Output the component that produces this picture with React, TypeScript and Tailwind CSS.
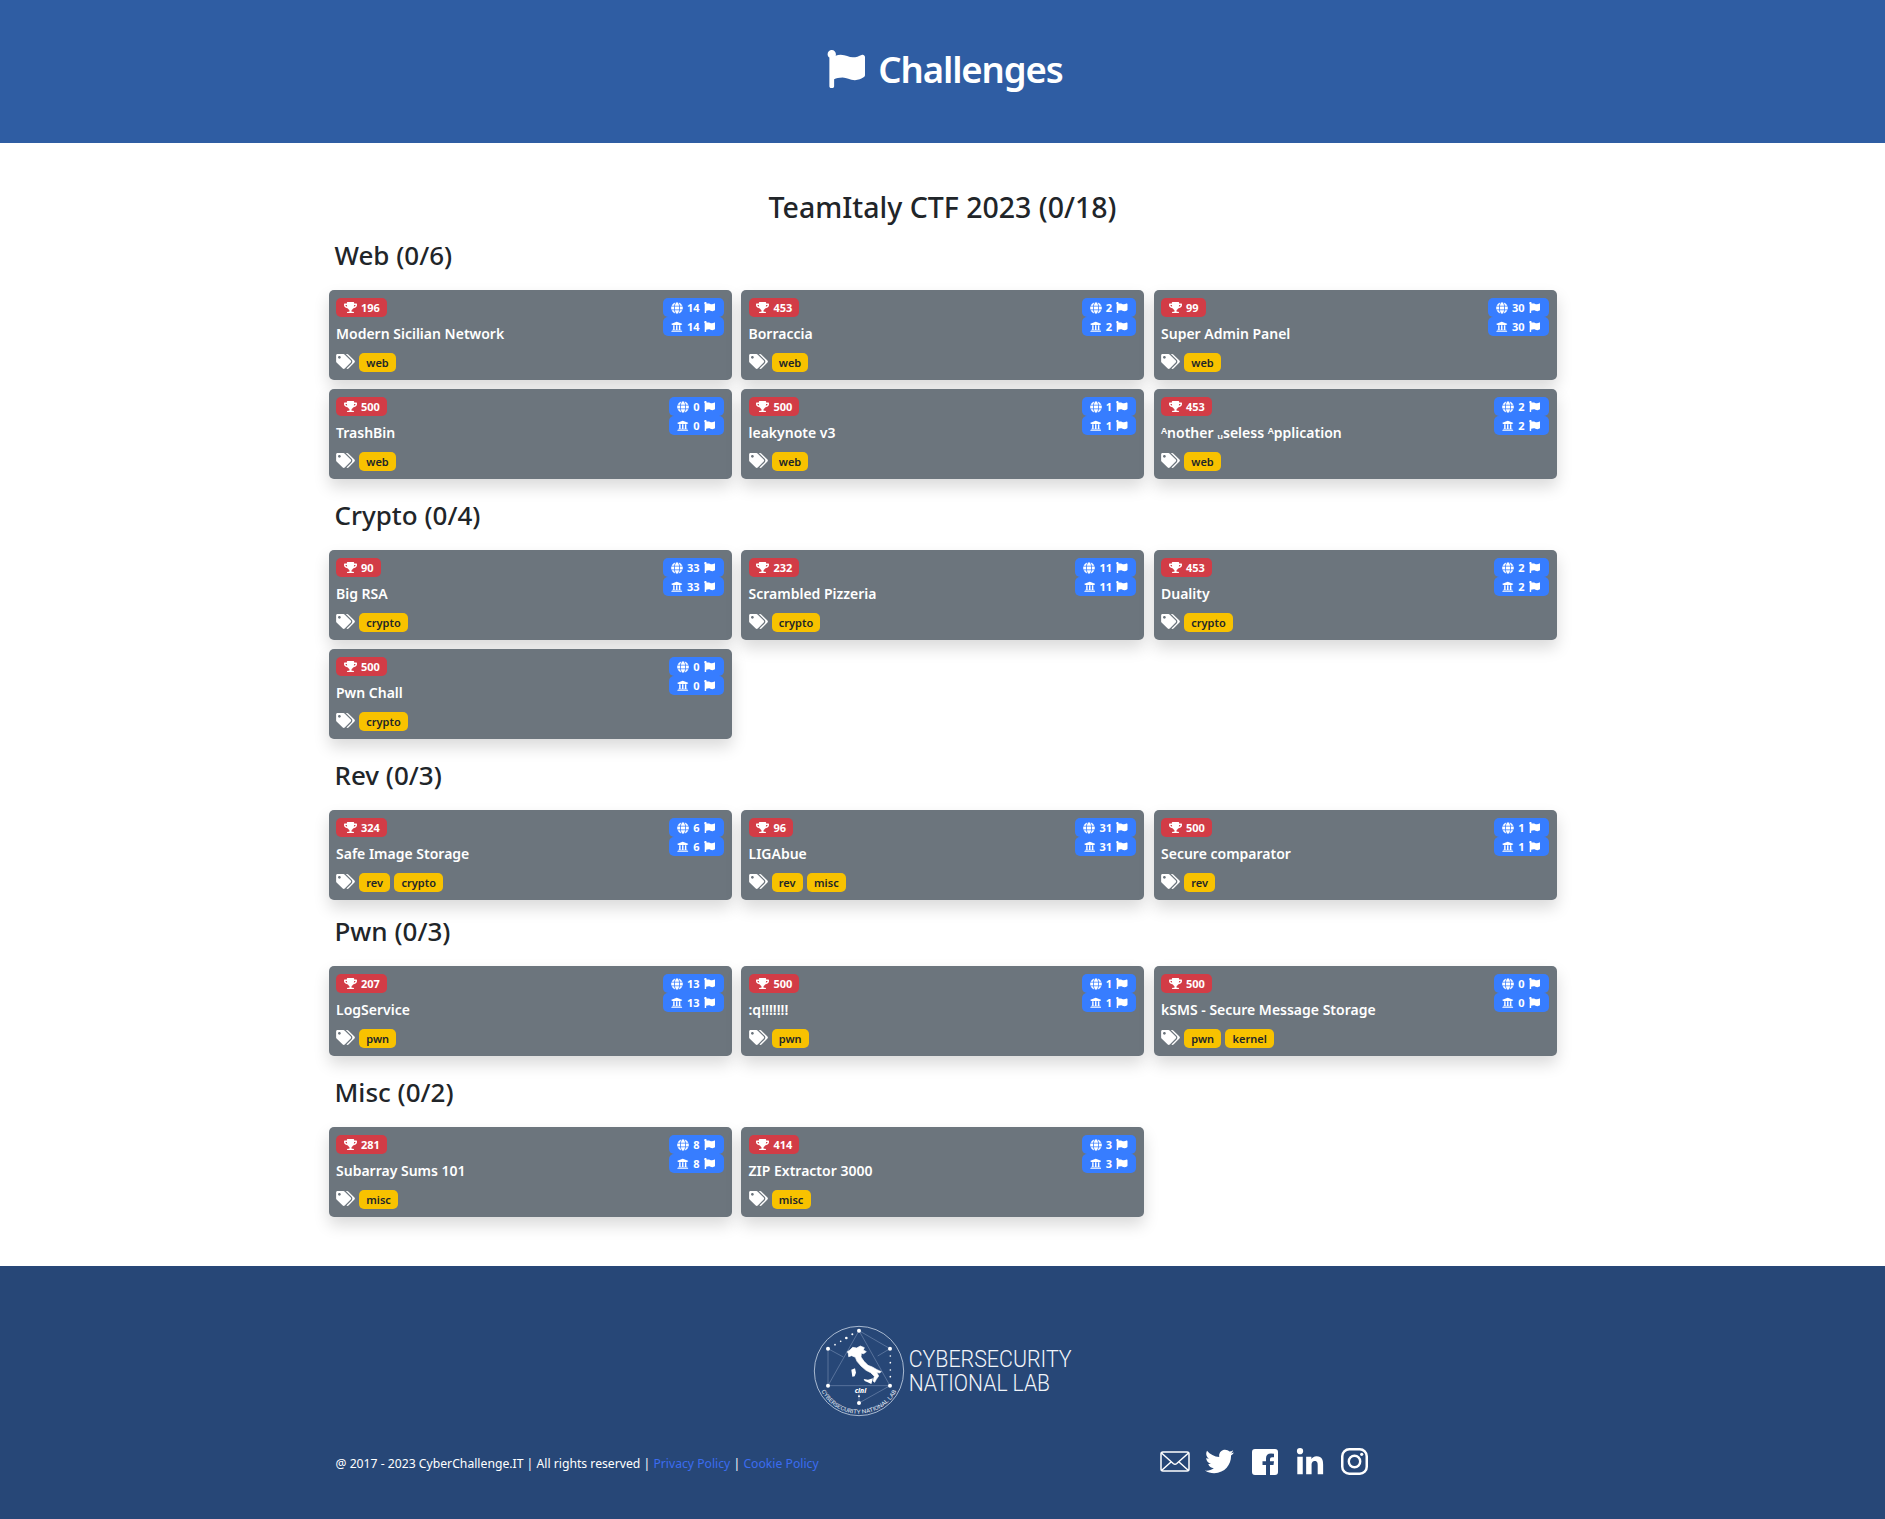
import type { ReactNode } from "react";
import { FaFlag, FaGlobe, FaTags, FaTrophy, FaTwitter, FaUniversity, FaLinkedinIn } from "react-icons/fa";

type Challenge = { name: string; points: number; solves: number; tags: string[] };
type Category = { name: string; spacing: string; challenges: Challenge[] };

const c = (name: string, points: number, solves: number, ...tags: string[]): Challenge => ({
  name,
  points,
  solves,
  tags,
});

const categories: Category[] = [
  {
    name: "Web (0/6)",
    spacing: "mt-2",
    challenges: [
      c("Modern Sicilian Network", 196, 14, "web"),
      c("Borraccia", 453, 2, "web"),
      c("Super Admin Panel", 99, 30, "web"),
      c("TrashBin", 500, 0, "web"),
      c("leakynote v3", 500, 1, "web"),
      c("ᴬnother ᵤseless ᴬpplication", 453, 2, "web"),
    ],
  },
  {
    name: "Crypto (0/4)",
    spacing: "mt-4",
    challenges: [
      c("Big RSA", 90, 33, "crypto"),
      c("Scrambled Pizzeria", 232, 11, "crypto"),
      c("Duality", 453, 2, "crypto"),
      c("Pwn Chall", 500, 0, "crypto"),
    ],
  },
  {
    name: "Rev (0/3)",
    spacing: "mt-4",
    challenges: [
      c("Safe Image Storage", 324, 6, "rev", "crypto"),
      c("LIGAbue", 96, 31, "rev", "misc"),
      c("Secure comparator", 500, 1, "rev"),
    ],
  },
  {
    name: "Pwn (0/3)",
    spacing: "mt-[11px]",
    challenges: [
      c("LogService", 207, 13, "pwn"),
      c(":q!!!!!!!", 500, 1, "pwn"),
      c("kSMS - Secure Message Storage", 500, 0, "pwn", "kernel"),
    ],
  },
  {
    name: "Misc (0/2)",
    spacing: "mt-4",
    challenges: [c("Subarray Sums 101", 281, 8, "misc"), c("ZIP Extractor 3000", 414, 3, "misc")],
  },
];

function IconSlot({ children }: { children: ReactNode }) {
  return <span className="flex w-[14px] shrink-0 justify-center">{children}</span>;
}

function SolveBadge({ icon, count }: { icon: ReactNode; count: number }) {
  return (
    <span className="flex h-[19px] items-center gap-[3px] rounded-[5px] bg-[#377dff] px-[7px] text-[11px] leading-[20px] font-bold">
      <IconSlot>{icon}</IconSlot>
      <span>{count}</span>
      <IconSlot>
        <FaFlag className="size-[11.5px]" />
      </IconSlot>
    </span>
  );
}

function ChallengeCard({ challenge }: { challenge: Challenge }) {
  return (
    <article className="flex h-[90px] justify-between rounded-[5px] bg-[#6c757d] pt-2 pr-2 pl-[7.5px] text-white shadow-[0_8px_16px_rgba(0,0,0,0.15)]">
      <div className="flex flex-col items-start">
        <span className="flex h-[19px] items-center gap-1 rounded-[5px] bg-[#d23c46] px-[7px] text-[11px] leading-[20px] font-bold">
          <IconSlot>
            <FaTrophy className="h-[11.5px] w-[13px]" />
          </IconSlot>
          {challenge.points}
        </span>
        <h3 className="mt-[7px] h-5 text-[14px] leading-5 font-semibold whitespace-nowrap">{challenge.name}</h3>
        <div className="mt-[9px] flex gap-1">
          <FaTags className="mt-px h-[15px] w-[19px]" />
          {challenge.tags.map((tag) => (
            <span
              key={tag}
              className="h-[19px] rounded-[5px] bg-[#f8c200] px-[7.25px] text-[11px] leading-[20px] font-semibold text-[#212529]"
            >
              {tag}
            </span>
          ))}
        </div>
      </div>
      <div className="flex flex-col items-end">
        <SolveBadge icon={<FaGlobe className="size-3" />} count={challenge.solves} />
        <SolveBadge icon={<FaUniversity className="size-[11.5px]" />} count={challenge.solves} />
      </div>
    </article>
  );
}

function LabLogo() {
  return (
    <svg width="262" height="95" viewBox="66 41 786 285" fill="none" className="block overflow-visible">
      <circle cx="207" cy="182" r="134" stroke="#c3d0e2" strokeWidth="2.5" />
      <g stroke="#6f88ae" strokeWidth="2">
        <path d="M207 61 300 115 263 137" />
        <path d="M207 61 114 226H300L207 61" />
        <path d="M114 226V115L160 140" />
        <path d="M300 226 207 278V250" />
      </g>
      <g fill="#fff">
        <circle cx="207" cy="61" r="6" />
        <circle cx="114" cy="115" r="6" />
        <circle cx="300" cy="115" r="6" />
        <circle cx="114" cy="226" r="6" />
        <circle cx="300" cy="226" r="6" />
        <circle cx="207" cy="278" r="6" />
        <circle cx="135" cy="103" r="2.5" />
        <circle cx="152" cy="93" r="2.5" />
        <circle cx="169" cy="83" r="4" />
        <circle cx="187" cy="72" r="3" />
        <circle cx="301" cy="137" r="2.5" />
        <circle cx="301" cy="157" r="2.5" />
        <circle cx="301" cy="179" r="2.5" />
        <circle cx="301" cy="199" r="2.5" />
        <circle cx="207" cy="258" r="3" />
        <path d="M172 124 180 119 188 111 200 113 211 107 223 112 220 119 229 124 221 130 214 129 213 140 222 153 234 165 247 170 261 178 274 184 268 188 260 186 266 197 259 207 254 216 249 212 253 198 242 187 228 180 213 167 201 153 196 141 185 136 176 139 175 130Z" stroke="#fff" strokeWidth="2" />
        <path d="M221 206 234 208 249 204 244 221 233 216 224 212Z" />
        <path d="M184 178 195 174 198 187 194 198 187 199Z" />
        <text x="194" y="248" fontSize="21" fontWeight="800" fontStyle="italic" textLength="35" lengthAdjust="spacingAndGlyphs">
          cini
        </text>
      </g>
      <path id="ring" d="M90.500 235 A128 128 0 0 0 323.500 235" />
      <text fill="#e6ecf5" fontFamily="Roboto" fontSize="17">
        <textPath href="#ring" startOffset="8" textLength="276" lengthAdjust="spacingAndGlyphs">
          CYBERSECURITY NATIONAL LAB
        </textPath>
      </text>
      <g fill="#f1f5fa" fontFamily="Roboto" fontWeight="300" fontSize="73">
        <text x="356" y="170" textLength="489" lengthAdjust="spacingAndGlyphs">
          CYBERSECURITY
        </text>
        <text x="356" y="241" textLength="424" lengthAdjust="spacingAndGlyphs">
          NATIONAL LAB
        </text>
      </g>
    </svg>
  );
}

function SocialLinks() {
  return (
    <div className="flex items-center text-white">
      <svg width="30" height="21" viewBox="0 0 30 21" fill="none" stroke="currentColor" strokeWidth="1.5">
        <rect x="1" y="1" width="28" height="19" rx="2" />
        <path d="M1.500 2 13.200 12.500Q15 14 16.800 12.500L28.500 2M1.500 19.500 11 11M28.500 19.500 19 11" />
      </svg>
      <FaTwitter className="ml-[15px] size-[29px]" />
      <svg width="26" height="26" viewBox="0 0 26 26" fill="currentColor" className="ml-[18px]">
        <path d="M3 0H23Q26 0 26 3V23Q26 26 23 26H18V16H21.500L22 12.200H18V10Q18 8.200 20 8.200H22V4.700Q20.500 4.500 19 4.500Q14 4.500 14 9.300V12.200H10.500V16H14V26H3Q0 26 0 23V3Q0 0 3 0Z" />
      </svg>
      <FaLinkedinIn className="mt-[3px] ml-[17px] size-[30px]" />
      <svg width="27" height="27" viewBox="0 0 27 27" fill="none" stroke="currentColor" className="ml-4">
        <rect x="1.250" y="1.250" width="24.500" height="24.500" rx="7" strokeWidth="2.500" />
        <circle cx="13.500" cy="13.500" r="5.700" strokeWidth="2.400" />
        <circle cx="20.700" cy="6.300" r="1.600" fill="currentColor" stroke="none" />
      </svg>
    </div>
  );
}

export default function App() {
  return (
    <div className="min-h-[1519px] bg-white font-['Noto_Sans',sans-serif] text-[#212529]">
      <header className="flex h-[143px] items-center justify-center bg-[#2f5da3] pb-[5px] pl-[5px] text-white">
        <FaFlag className="size-[38px]" />
        <h1 className="ml-[13px] text-[36.5px] leading-[44px] font-semibold tracking-[-1.1px]">Challenges</h1>
      </header>

      <main className="mx-auto w-[1228px] pt-[44px] pb-[49px]">
        <h2 className="h-10 text-center text-[28.5px] leading-10 font-medium">TeamItaly CTF 2023 (0/18)</h2>
        {categories.map((category) => (
          <section key={category.name} className={category.spacing}>
            <h2 className="mb-[15px] h-10 pl-1.5 text-[26px] leading-10 font-medium">{category.name}</h2>
            <div className="grid grid-cols-3 gap-x-[9.5px] gap-y-[9px]">
              {category.challenges.map((challenge) => (
                <ChallengeCard key={challenge.name} challenge={challenge} />
              ))}
            </div>
          </section>
        ))}
      </main>

      <footer className="h-[253px] bg-[#274777] pt-[58px] text-white">
        <div className="flex justify-center">
          <LabLogo />
        </div>
        <div className="mx-auto mt-[26px] flex w-[1228px] items-center pl-[7px]">
          <p className="w-[824px] pt-1 text-[12.2px] leading-5">
            @ 2017 - 2023 CyberChallenge.IT | All rights reserved |{" "}
            <a className="text-[#3b6cf0]">Privacy Policy</a> | <a className="text-[#3b6cf0]">Cookie Policy</a>
          </p>
          <SocialLinks />
        </div>
      </footer>
    </div>
  );
}
